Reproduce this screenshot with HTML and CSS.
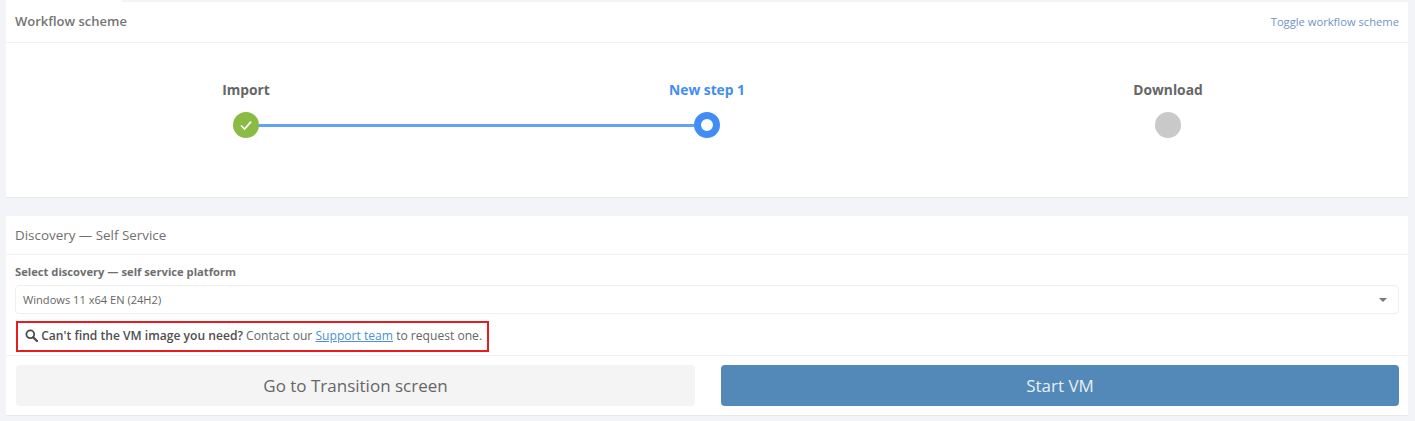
FILE: index.html
```html
<!DOCTYPE html>
<html>
<head>
    <meta charset="UTF-8">
    <title>Workflow</title>
    <link rel="stylesheet" href="styles.css">
</head>
<body>
<div class="top-strip"></div>
<div class="panel scheme">
    <div class="panel-head">
        <span class="panel-title">Workflow scheme</span>
        <a class="toggle" href="#">Toggle workflow scheme</a>
    </div>
    <div class="steps">
        <div class="step done">
            <div class="step-name">Import</div>
            <div class="dot">
                <svg width="14" height="14" viewBox="0 0 14 14"><path d="M2 7.5 L5.6 11 L12 3.6" fill="none" stroke="#fff" stroke-width="1.7"/></svg>
            </div>
        </div>
        <div class="step current">
            <div class="step-name">New step 1</div>
            <div class="dot"></div>
        </div>
        <div class="step">
            <div class="step-name">Download</div>
            <div class="dot"></div>
        </div>
    </div>
</div>
<div class="panel discovery">
    <div class="panel-head">
        <span class="panel-title">Discovery — Self Service</span>
    </div>
    <div class="panel-body">
        <div class="field-label">Select discovery — self service platform</div>
        <div class="select">
            <span>Windows 11 x64 EN (24H2)</span>
            <i class="caret"></i>
        </div>
        <div class="hint">
            <svg width="13" height="13" viewBox="0 0 13 13"><circle cx="5.3" cy="5.3" r="3.9" fill="none" stroke="#4a4a4a" stroke-width="1.8"/><path d="M8.2 8.2 L12 12" stroke="#4a4a4a" stroke-width="2.2" stroke-linecap="round"/></svg>
            <b>Can't find the VM image you need?</b> Contact our <a href="#">Support team</a> to request one.
        </div>
    </div>
    <div class="actions">
        <button class="btn btn-light">Go to Transition screen</button>
        <button class="btn btn-blue">Start VM</button>
    </div>
</div>
</body>
</html>
```

FILE: styles.css
```css
*{
    padding: 0;
    margin: 0;
    box-sizing: border-box;
}
body{
    background-color: #f3f4f8;
    font-family: "Open Sans", "Liberation Sans", sans-serif;
    color: #666;
    height: 421px;
    overflow: hidden;
    padding: 0 7px 0 6px;
}
.top-strip{
    width: 116px;
    height: 2px;
    background-color: #fff;
}
.panel{
    background-color: #fff;
    border-bottom: 1px solid #e9eaee;
}
.panel-head{
    display: flex;
    justify-content: space-between;
    align-items: center;
    padding: 0 9px 2px;
    border-bottom: 1px solid #f1f2f4;
}
.panel-title{
    font-size: 13px;
}
.toggle{
    font-size: 11.2px;
    color: #6f94c6;
    text-decoration: none;
}
.scheme{
    height: 196px;
}
.scheme .panel-head{
    height: 41px;
}
.scheme .panel-title{
    font-weight: 600;
    color: #757575;
}
.steps{
    display: grid;
    grid-template-columns: repeat(3, 461px);
    padding: 38px 0 0 9.5px;
}
.step{
    position: relative;
    display: flex;
    flex-direction: column;
    align-items: center;
}
.step-name{
    font-size: 13.8px;
    font-weight: 700;
    line-height: 18px;
    color: #666;
    margin-bottom: 13px;
}
.dot{
    position: relative;
    z-index: 1;
    width: 26px;
    height: 26px;
    border-radius: 50%;
    background-color: #c9c9c9;
    display: flex;
    align-items: center;
    justify-content: center;
}
.done .dot{
    background-color: #8abb45;
}
.done::after{
    content: "";
    position: absolute;
    left: 50%;
    top: 43px;
    width: 461px;
    height: 3px;
    background-color: #62a2f6;
}
.current .step-name{
    color: #418df5;
}
.current .dot{
    background-color: #fff;
    border: 7px solid #418df5;
}
.discovery{
    margin-top: 18px;
    height: 200px;
}
.discovery .panel-head{
    height: 39px;
    padding-bottom: 1px;
}
.discovery .panel-title{
    font-size: 13.4px;
    color: #707070;
}
.panel-body{
    padding: 9px 9px 0 9px;
    height: 101px;
    border-bottom: 1px solid #f1f2f4;
}
.field-label{
    font-size: 11.2px;
    font-weight: 700;
    line-height: 15px;
    color: #6e6e6e;
}
.select{
    display: flex;
    justify-content: space-between;
    align-items: center;
    height: 29px;
    margin-top: 6px;
    padding: 0 11px 0 7px;
    border: 1px solid #eeeff1;
    border-radius: 4px;
    font-size: 11.1px;
    color: #666;
}
.caret{
    border-left: 4px solid transparent;
    border-right: 4px solid transparent;
    border-top: 4px solid #777;
}
.hint{
    display: inline-block;
    margin: 7px 0 0 1px;
    height: 31px;
    padding: 0 5px 0 7px;
    border: 2px solid #e81c1c;
    font-size: 12.1px;
    line-height: 26px;
    white-space: nowrap;
    color: #666;
}
.hint svg{
    vertical-align: -2px;
}
.hint b{
    font-weight: 600;
    color: #4f4f4f;
}
.hint a{
    color: #4c92d0;
}
.actions{
    display: grid;
    grid-template-columns: 679px 678px;
    gap: 26px;
    padding: 9px 9px 0 10px;
}
.btn{
    height: 41px;
    border: 0;
    border-radius: 4px;
    font-family: inherit;
    font-size: 17px;
}
.btn-light{
    background-color: #f4f4f4;
    color: #666;
}
.btn-blue{
    background-color: #5289b8;
    color: #e8eff5;
}
```
